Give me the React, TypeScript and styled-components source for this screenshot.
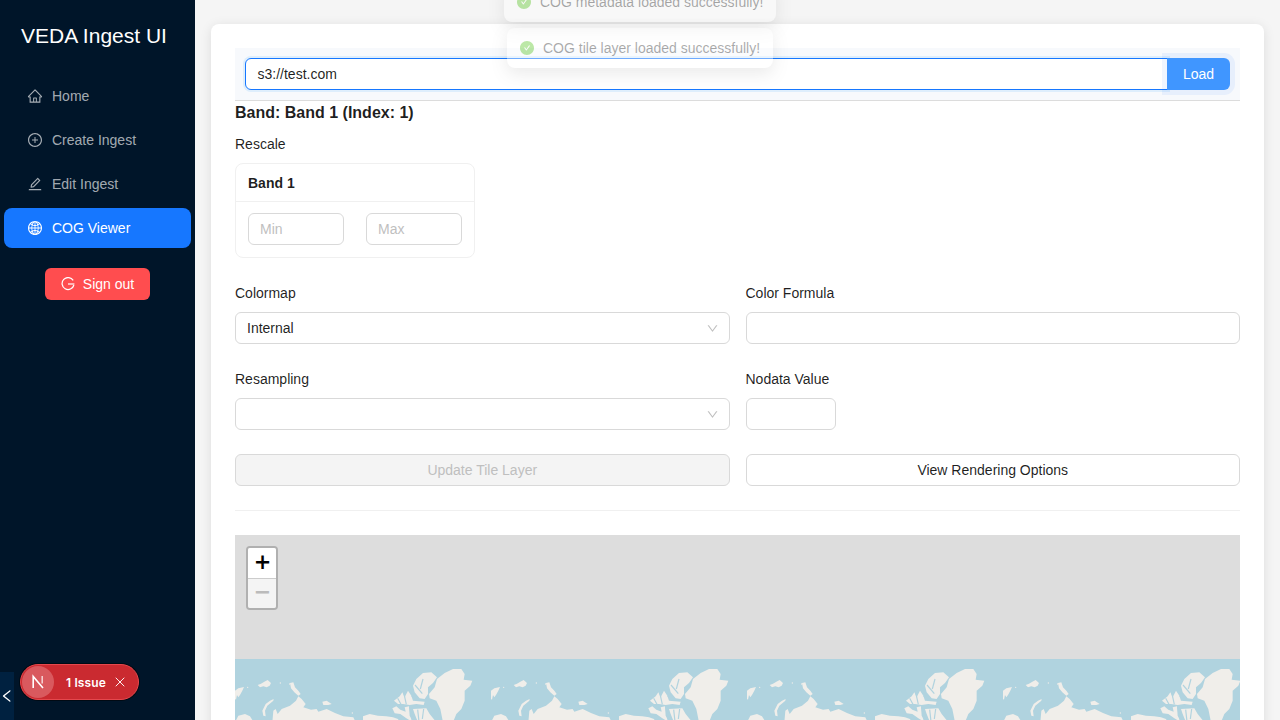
import React from 'react';
import styled, { createGlobalStyle } from 'styled-components';
import {
  AiFillCheckCircle,
  AiOutlineDown,
  AiOutlineEdit,
  AiOutlineGlobal,
  AiOutlineHome,
  AiOutlineLeft,
  AiOutlinePlusCircle,
} from 'react-icons/ai';
import { X } from 'lucide-react';

const GlobalStyle = createGlobalStyle`
  html, body {
    margin: 0;
    padding: 0;
    height: 100%;
    overflow: hidden;
    background: #f5f5f5;
    font-family: 'Liberation Sans', Arial, sans-serif;
    font-size: 14px;
    color: rgba(0, 0, 0, 0.88);
  }
  * { box-sizing: border-box; }
`;

const Shell = styled.div`
  display: flex;
  height: 720px;
  overflow: hidden;
  position: relative;
`;

const Sidebar = styled.aside`
  width: 195px;
  flex: none;
  background: #001529;
  position: relative;
  display: flex;
  flex-direction: column;
`;

const Brand = styled.div`
  height: 72px;
  padding: 23px 0 0 21px;
  color: #fff;
  font-size: 21px;
  line-height: 26px;
  white-space: nowrap;
`;

const Menu = styled.nav`
  display: flex;
  flex-direction: column;
  gap: 4px;
  padding: 4px;
`;

const MenuItem = styled.a<{ $active?: boolean }>`
  height: 40px;
  border-radius: 8px;
  display: flex;
  align-items: center;
  gap: 9px;
  padding-left: 23px;
  background: ${({ $active }) => ($active ? '#1677ff' : 'transparent')};
  color: ${({ $active }) => ($active ? '#fff' : 'rgba(255, 255, 255, 0.65)')};
  svg {
    font-size: 16px;
    flex: none;
  }
`;

const SignOutRow = styled.div`
  display: flex;
  justify-content: center;
  padding-top: 16px;
`;

const SignOut = styled.button`
  height: 32px;
  width: 105px;
  padding: 0 0 1px;
  border: 0;
  border-radius: 6px;
  background: #ff4d4f;
  color: #fff;
  font: inherit;
  display: flex;
  align-items: center;
  justify-content: center;
  gap: 8px;
`;

const Collapse = styled.div`
  position: absolute;
  left: 0;
  bottom: 0;
  width: 14px;
  height: 48px;
  background: #002140;
  color: #fff;
  display: flex;
  align-items: center;
  justify-content: center;
  svg {
    font-size: 16px;
    flex: none;
  }
`;

const IssueBadge = styled.div`
  position: absolute;
  left: 20px;
  top: 664px;
  width: 119px;
  height: 36px;
  border-radius: 18px;
  background: #ca2a30;
  border: 1px solid #e5484d;
  box-shadow: 0 0 0 1px rgba(0, 0, 0, 0.5);
  display: flex;
  align-items: center;
  color: #fff;
  font-family: Inter, sans-serif;
  font-size: 12px;
  font-weight: 600;
`;

const LogoDisc = styled.div`
  width: 32px;
  height: 32px;
  margin-left: 1px;
  border-radius: 50%;
  background: #d9595e;
  display: flex;
  align-items: center;
  justify-content: center;
`;

const IssueText = styled.span`
  margin-left: 12px;
  white-space: nowrap;
  letter-spacing: 0.15px;
`;

const IssueClose = styled(X)`
  margin-left: 6px;
  flex: none;
`;

const Main = styled.main`
  flex: 1;
  min-width: 0;
  padding: 24px 16px 0;
`;

const Card = styled.section`
  background: #fff;
  border-radius: 8px;
  padding: 24px;
  box-shadow: 0 2px 12px rgba(0, 0, 0, 0.1);
`;

const Toolbar = styled.div`
  height: 53px;
  padding: 10px;
  background: #f7f9fc;
  border-bottom: 1px solid #dcdcdc;
  display: flex;
`;

const UrlInput = styled.div`
  flex: 1;
  height: 32px;
  margin-right: -1px;
  padding: 0 11.5px;
  border: 1px solid #1677ff;
  border-radius: 6px 0 0 6px;
  background: #fff;
  line-height: 30px;
  box-shadow: 0 0 0 2px rgba(5, 145, 255, 0.1);
`;

const LoadButton = styled.button`
  width: 63px;
  height: 32px;
  border: 0;
  border-radius: 0 6px 6px 0;
  background: #4096ff;
  color: #fff;
  font: inherit;
  box-shadow: 0 0 0 5px rgba(22, 119, 255, 0.07);
`;

const BandTitle = styled.h3`
  margin: 0;
  padding-top: 2px;
  font-size: 16px;
  line-height: 19px;
  font-weight: 700;
`;

const Label = styled.div`
  height: 22px;
  line-height: 22px;
`;

const RescaleLabel = styled(Label)`
  margin-top: 11px;
  margin-bottom: 8px;
`;

const BandCard = styled.div`
  width: 240px;
  height: 95px;
  border: 1px solid #f0f0f0;
  border-radius: 8px;
`;

const BandCardHead = styled.div`
  height: 38px;
  padding: 0 12px;
  font-weight: 700;
  line-height: 38px;
  border-bottom: 1px solid #f0f0f0;
`;

const BandCardBody = styled.div`
  display: flex;
  justify-content: space-between;
  padding: 11px 12px;
`;

const BaseField = styled.div<{ $width?: number }>`
  width: ${({ $width }) => ($width ? `${$width}px` : '100%')};
  height: 32px;
  padding: 0 11px;
  border: 1px solid #d9d9d9;
  border-radius: 6px;
  background: #fff;
  line-height: 30px;
  display: flex;
  align-items: center;
  justify-content: space-between;
  svg {
    color: #bfbfbf;
    font-size: 13px;
    margin-right: -1px;
  }
`;

const Placeholder = styled.span`
  color: #bfbfbf;
`;

const FormGrid = styled.div`
  display: grid;
  grid-template-columns: 494.5px 494.5px;
  column-gap: 16px;
  margin-top: 24px;
`;

const FormCell = styled.div<{ $gap: number }>`
  padding-bottom: ${({ $gap }) => $gap}px;
  ${Label} {
    margin-bottom: 8px;
  }
`;

const ActionButton = styled.button<{ $disabled?: boolean }>`
  width: 100%;
  height: 32px;
  border-radius: 6px;
  border: 1px solid #d9d9d9;
  font: inherit;
  background: ${({ $disabled }) => ($disabled ? '#f4f4f4' : '#fff')};
  color: ${({ $disabled }) => ($disabled ? '#bfbfbf' : 'rgba(0, 0, 0, 0.88)')};
`;

const Divider = styled.hr`
  border: 0;
  border-top: 1px solid #f0f0f0;
  margin: 24px 0;
`;

const MapFrame = styled.div`
  position: relative;
  height: 400px;
  background: #ddd;
  padding-top: 124px;
`;

const MapTiles = styled.svg`
  display: block;
  width: 100%;
  height: 276px;
`;

const ZoomControl = styled.div`
  position: absolute;
  left: 11px;
  top: 11px;
  width: 32px;
  border: 2px solid #b0b0b0;
  border-radius: 4px;
  overflow: hidden;
`;

const ZoomButton = styled.div<{ $disabled?: boolean }>`
  height: 30px;
  padding: 0 0 3px 1px;
  display: flex;
  align-items: center;
  justify-content: center;
  background: ${({ $disabled }) => ($disabled ? '#f4f4f4' : '#fff')};
  color: ${({ $disabled }) => ($disabled ? '#bbb' : '#000')};
  font-family: 'DejaVu Sans', sans-serif;
  font-size: 21px;
  font-weight: 700;
  & + & {
    border-top: 1px solid #ccc;
  }
`;

const Toast = styled.div<{ $top: number; $width: number }>`
  position: absolute;
  left: 640px;
  top: ${({ $top }) => $top}px;
  width: ${({ $width }) => $width}px;
  height: 40px;
  margin-left: ${({ $width }) => -$width / 2}px;
  padding: 0 12px;
  display: flex;
  align-items: center;
  gap: 8px;
  white-space: nowrap;
  border-radius: 8px;
  background: #fff;
  box-shadow: 0 6px 16px rgba(0, 0, 0, 0.2);
  opacity: 0.38;
  svg {
    color: #52c41a;
    font-size: 16px;
    flex: none;
  }
`;

// traced off one 256px tile, in 3x units
const LAND = [
  '0,95 10,88 27,84 22,95 15,108 10,115 6,108 3,122 0,120',
  '68,78 78,74 88,68 98,63 108,72 104,80 95,85 85,82 75,85',
  '165,72 175,70 180,85 190,95 197,105 190,110 178,100 168,88',
  '116,120 105,125 92,135 82,155 85,170 92,172 90,155 97,140 115,125',
  '112,190 115,155 122,150 128,165 140,150 165,140 183,125 190,112 200,120 212,135 205,145 228,152 245,150 250,158 275,150 300,162 325,172 355,175 362,190',
  '262,128 275,125 290,135 280,138 265,138',
  '0,190 10,170 30,165 45,172 52,183 52,190',
  '384,190 384,172 404,165 429,170 454,172 474,175 489,180 494,190',
  '472,148 484,142 496,152 512,158 509,145 522,142 524,170 534,190 514,178 496,165 479,163',
  '534,150 574,148 584,165 604,190 549,190 539,165',
  '477,125 494,112 502,100 509,115 519,95 529,110 534,125 569,128 566,138 544,135 524,138 504,135 489,135',
  '534,80 544,60 564,42 589,40 606,55 594,72 579,85 579,105 569,120 554,118 539,100',
  '582,105 599,85 606,60 629,42 654,30 679,30 689,45 686,62 712,65 706,80 689,95 689,125 679,150 664,165 654,190 624,190 616,150 604,125 584,118',
];

// sea channels cut through the Canadian islands
const CHANNELS = [
  'M506 100l8 36',
  'M488 118l10 18',
  'M530 112l18 10',
  'M540 78l22 26',
  'M564 60l-8 30',
  'M524 144l8 40',
  'M548 152l4 36',
  'M566 150l-4 30',
];

const ISLANDS = [
  [38, 85],
  [352, 162],
  [164, 75],
  [136, 72],
];

const App = () => {
  return (
    <Shell>
      <GlobalStyle />
      <Sidebar>
        <Brand>VEDA Ingest UI</Brand>
        <Menu>
          <MenuItem>
            <AiOutlineHome />
            Home
          </MenuItem>
          <MenuItem>
            <AiOutlinePlusCircle />
            Create Ingest
          </MenuItem>
          <MenuItem>
            <AiOutlineEdit />
            Edit Ingest
          </MenuItem>
          <MenuItem $active>
            <AiOutlineGlobal />
            COG Viewer
          </MenuItem>
        </Menu>
        <SignOutRow>
          <SignOut>
            <svg width="14" height="14" viewBox="0 0 14 14" fill="none" stroke="#fff" strokeWidth="1.2">
              <path d="M12.2 3.4A6 6 0 1 0 12.9 8" />
              <path d="M7 7h6.4" />
            </svg>
            Sign out
          </SignOut>
        </SignOutRow>
        <Collapse>
          <AiOutlineLeft />
        </Collapse>
      </Sidebar>

      <Main>
        <Card>
          <Toolbar>
            <UrlInput>s3://test.com</UrlInput>
            <LoadButton>Load</LoadButton>
          </Toolbar>
          <BandTitle>Band: Band 1 (Index: 1)</BandTitle>
          <RescaleLabel>Rescale</RescaleLabel>
          <BandCard>
            <BandCardHead>Band 1</BandCardHead>
            <BandCardBody>
              <BaseField $width={96}>
                <Placeholder>Min</Placeholder>
              </BaseField>
              <BaseField $width={96}>
                <Placeholder>Max</Placeholder>
              </BaseField>
            </BandCardBody>
          </BandCard>

          <FormGrid>
            <FormCell $gap={24}>
              <Label>Colormap</Label>
              <BaseField>
                Internal
                <AiOutlineDown />
              </BaseField>
            </FormCell>
            <FormCell $gap={24}>
              <Label>Color Formula</Label>
              <BaseField />
            </FormCell>
            <FormCell $gap={24}>
              <Label>Resampling</Label>
              <BaseField>
                <span />
                <AiOutlineDown />
              </BaseField>
            </FormCell>
            <FormCell $gap={24}>
              <Label>Nodata Value</Label>
              <BaseField $width={90} />
            </FormCell>
            <FormCell $gap={0}>
              <ActionButton $disabled>Update Tile Layer</ActionButton>
            </FormCell>
            <FormCell $gap={0}>
              <ActionButton>View Rendering Options</ActionButton>
            </FormCell>
          </FormGrid>

          <Divider />

          <MapFrame>
            <MapTiles>
              <defs>
                <pattern id="world" width="256" height="276" patternUnits="userSpaceOnUse">
                  <rect width="256" height="276" fill="#b0d3df" />
                  <g transform="scale(0.33333)" fill="#f0eeea">
                    {LAND.map((points) => (
                      <polygon key={points} points={points} />
                    ))}
                    {ISLANDS.map(([cx, cy]) => (
                      <circle key={`${cx}-${cy}`} cx={cx} cy={cy} r="2" />
                    ))}
                    <rect y="186" width="768" height="642" />
                    {CHANNELS.map((d) => (
                      <path key={d} d={d} fill="none" stroke="#b0d3df" strokeWidth="3.5" />
                    ))}
                  </g>
                </pattern>
              </defs>
              <rect width="100%" height="100%" fill="url(#world)" />
            </MapTiles>
            <ZoomControl>
              <ZoomButton>+</ZoomButton>
              <ZoomButton $disabled>−</ZoomButton>
            </ZoomControl>
          </MapFrame>
        </Card>
      </Main>

      <IssueBadge>
        <LogoDisc>
          <svg width="16" height="16" viewBox="0 0 16 16" fill="none" stroke="#fff" strokeWidth="1.6">
            <path d="M3.2 14V2.4L13 14" />
            <path d="M12.2 2v7.5" strokeOpacity="0.7" />
          </svg>
        </LogoDisc>
        <IssueText>1 Issue</IssueText>
        <IssueClose size={16} strokeWidth={1.4} />
      </IssueBadge>

      <Toast $top={-18} $width={272}>
        <AiFillCheckCircle />
        COG metadata loaded successfully!
      </Toast>
      <Toast $top={28} $width={266}>
        <AiFillCheckCircle />
        COG tile layer loaded successfully!
      </Toast>
    </Shell>
  );
};

export default App;
